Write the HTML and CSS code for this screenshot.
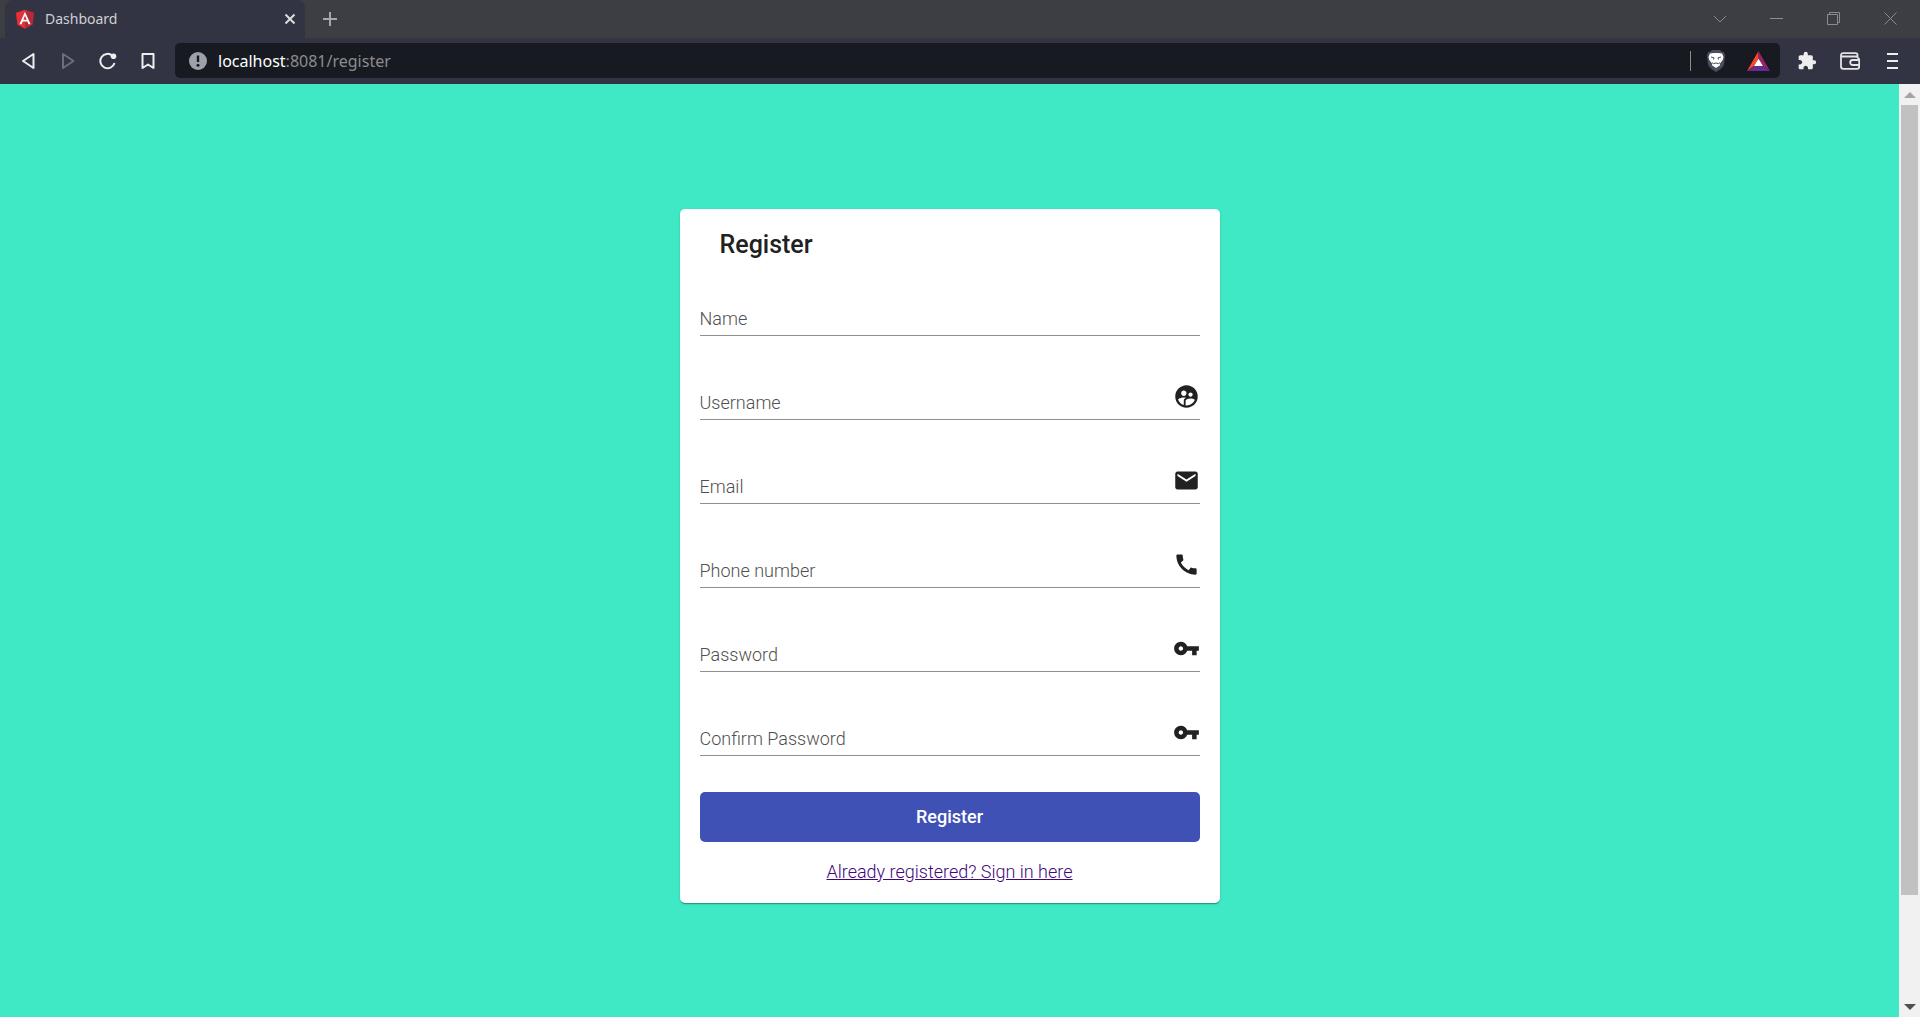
FILE: index.html
```html
<!DOCTYPE html>
<html lang="en">
<head>
<meta charset="utf-8">
<title>Dashboard</title>
<link rel="stylesheet" href="styles.css">
</head>
<body>
<header class="browser">
  <div class="tab-strip">
    <div class="tab">
      <svg class="favicon" viewBox="0 0 250 250"><path fill="#dd0031" d="M125 8 13 48l17 147 95 53 95-53 17-147z"/><path fill="#b52a35" d="M125 8v240l95-53 17-147z"/><path fill="#e23237" d="M125 8 13 48l17 147 95 53z"/><path fill="#fff" d="M125 35 55 192h27l14-35h58l14 35h27zm21 99h-42l21-50z"/></svg>
      <span class="tab-title">Dashboard</span>
      <button class="tab-close" aria-label="Close tab"><svg width="12" height="12" viewBox="0 0 12 12"><path d="M1.500 1.500l9 9m0-9l-9 9" stroke="#dcdde0" stroke-width="2"/></svg></button>
    </div>
    <button class="new-tab" aria-label="New tab"><svg width="16" height="16" viewBox="0 0 16 16"><path d="M8 1v14M1 8h14" stroke="#a8a8ac" stroke-width="2"/></svg></button>
    <div class="window-controls">
      <button aria-label="Search tabs"><svg width="14" height="8" viewBox="0 0 14 8"><path d="M1 1l6 6 6-6"/></svg></button>
      <button aria-label="Minimize"><svg width="13" height="13" viewBox="0 0 13 13"><path d="M0 6.500h13"/></svg></button>
      <button aria-label="Restore"><svg width="13" height="13" viewBox="0 0 13 13"><path d="M.5 2.500h10v10H.5zM2.500 2.500v-2h10v10h-2"/></svg></button>
      <button aria-label="Close"><svg width="13" height="13" viewBox="0 0 13 13"><path d="M.5.5l12 12m0-12l-12 12"/></svg></button>
    </div>
  </div>
  <div class="toolbar">
    <button class="nav" aria-label="Back"><svg width="18" height="18" viewBox="0 0 18 18"><path d="M14.500 2v14L4 9z"/></svg></button>
    <button class="nav disabled" aria-label="Forward"><svg width="18" height="18" viewBox="0 0 18 18"><path d="M4 2v14l10.500-7z"/></svg></button>
    <button class="nav" aria-label="Reload"><svg width="20" height="18" viewBox="0 0 20 18"><path d="M14.500 3.800A7.200 7.200 0 1 0 16.500 11"/><circle cx="15.500" cy="4.200" r="2.800" fill="#eeeeef" stroke="none"/></svg></button>
    <button class="nav" aria-label="Bookmark"><svg width="18" height="18" viewBox="0 0 18 18"><path d="M3.500 2h11v14L9 12.500 3.500 16z"/></svg></button>
    <div class="address">
      <svg class="info" viewBox="0 0 18 18"><circle cx="9" cy="9" r="9" fill="#9fa1aa"/><path d="M9 3.500v6.500" stroke="#181a21" stroke-width="2.400"/><circle cx="9" cy="13.200" r="1.500" fill="#181a21"/></svg>
      <div class="url"><span class="host">localhost</span>:8081/register</div>
      <span class="divider"></span>
      <button class="badge-button" aria-label="Shields"><svg width="20" height="22" viewBox="0 0 20 22"><path d="M4 2 6 0h8l2 2h2l1 4-1 8c-1 4-5 6-8 8-3-2-7-4-8-8L1 6l1-4z" fill="#4a4d5c"/><path fill="#fff" d="M4 3.500 7.500 3h5l3.500.5L17.500 7l-.8 3-2.700 3.500v1.700L10 18l-4-2.800v-1.700L3.300 10 2.500 7z"/><path d="M5 7l3 .8-.5 1.700M15 7l-3 .8.5 1.700M6 12.700l1.500 1L10 13l2.500.7 1.500-1" stroke="#4a4d5c" stroke-width="1" fill="none"/></svg></button>
      <button class="badge-button" aria-label="Rewards"><svg width="23" height="20" viewBox="0 0 23 20"><path fill="#ff4724" d="M11.500 0 0 20l7-5 4.500-8z"/><path fill="#9e1f63" d="M11.500 0 23 20l-7-5-4.500-8z"/><path fill="#662d91" d="M0 20h23l-7-5H7z"/><path fill="#fff" d="M11.500 7.500 16 15H7z"/></svg></button>
    </div>
    <div class="extensions">
      <button aria-label="Extensions"><svg width="20" height="20" viewBox="0 0 24 24"><path fill="#eeeeef" d="M20.500 11H19V7c0-1.100-.9-2-2-2h-4V3.500a2.500 2.500 0 0 0-5 0V5H4c-1.100 0-1.990.9-1.990 2v3.800H3.500c1.490 0 2.700 1.210 2.700 2.700s-1.210 2.700-2.700 2.700H2V20c0 1.100.9 2 2 2h3.800v-1.500c0-1.490 1.210-2.700 2.700-2.700s2.700 1.210 2.700 2.700V22H17c1.100 0 2-.9 2-2v-4h1.500a2.500 2.500 0 0 0 0-5z"/></svg></button>
      <button aria-label="Wallet"><svg width="20" height="18" viewBox="0 0 20 18" fill="none" stroke="#e4e4e6" stroke-width="1.800"><path d="M17.500 6V4.500H3A2 2 0 0 1 1 3.200C1 1.800 2 1.200 3 1.200h12.500c1 0 2 .8 2 1.800v1.500M1 3v11.500c0 1.400 1 2.300 2.300 2.300H17c1.400 0 2.200-.8 2.200-2V8c0-1.200-.7-2-1.700-2.200M19 8h-6.300a2.500 2.500 0 0 0 0 5H19"/></svg></button>
      <button aria-label="Menu"><svg width="11" height="16" viewBox="0 0 11 16"><path d="M0 1h11M0 8h11M0 15h11" stroke="#eeeeef" stroke-width="2"/></svg></button>
    </div>
  </div>
</header>
<div class="viewport">
  <main class="page">
    <section class="card">
      <h1>Register</h1>
      <form>
        <div class="field"><input type="text" placeholder="Name" aria-label="Name"></div>
        <div class="field"><input type="text" placeholder="Username" aria-label="Username">
          <svg viewBox="0 0 24 24"><path d="M11.990 2C6.470 2 2 6.480 2 12s4.470 10 9.990 10S22 17.520 22 12 17.520 2 11.990 2zm3.610 6.340c1.070 0 1.930.86 1.930 1.930s-.86 1.930-1.930 1.930-1.930-.86-1.930-1.930c-.01-1.070.86-1.930 1.930-1.930zm-6-1.580c1.300 0 2.360 1.060 2.360 2.360s-1.060 2.360-2.360 2.360-2.360-1.060-2.360-2.360c0-1.310 1.050-2.360 2.360-2.360zm0 9.130v3.750c-2.400-.75-4.300-2.600-5.140-4.960 1.050-1.120 3.670-1.690 5.140-1.690.53 0 1.200.08 1.900.22-1.640.87-1.900 2.020-1.900 2.680zM11.990 20c-.27 0-.53-.01-.79-.04v-4.070c0-1.420 2.940-2.130 4.400-2.130 1.070 0 2.920.39 3.840 1.150C18.280 17.880 15.390 20 11.990 20z"/></svg></div>
        <div class="field"><input type="email" placeholder="Email" aria-label="Email">
          <svg viewBox="0 0 24 24"><path d="M20 4H4c-1.100 0-1.990.9-1.990 2L2 18c0 1.100.9 2 2 2h16c1.100 0 2-.9 2-2V6c0-1.100-.9-2-2-2zm0 4l-8 5-8-5V6l8 5 8-5v2z"/></svg></div>
        <div class="field"><input type="tel" placeholder="Phone number" aria-label="Phone number">
          <svg viewBox="0 0 24 24"><path d="M20.010 15.380c-1.230 0-2.420-.2-3.530-.56-.35-.12-.74-.03-1.010.24l-1.570 1.970c-2.830-1.350-5.480-3.900-6.890-6.830l1.950-1.660c.27-.28.35-.67.24-1.020-.37-1.110-.56-2.300-.56-3.530 0-.54-.45-.99-.99-.99H4.190C3.650 3 3 3.240 3 3.990 3 13.280 10.730 21 20.010 21c.71 0 .99-.63.99-1.180v-3.450c0-.54-.45-.99-.99-.99z"/></svg></div>
        <div class="field"><input type="password" placeholder="Password" aria-label="Password">
          <svg viewBox="0 0 24 24"><path d="M12.650 10C11.830 7.670 9.610 6 7 6c-3.310 0-6 2.690-6 6s2.690 6 6 6c2.610 0 4.830-1.670 5.650-4H17v4h4v-4h2v-4H12.650zM7 14c-1.100 0-2-.9-2-2s.9-2 2-2 2 .9 2 2-.9 2-2 2z"/></svg></div>
        <div class="field"><input type="password" placeholder="Confirm Password" aria-label="Confirm Password">
          <svg viewBox="0 0 24 24"><path d="M12.650 10C11.830 7.670 9.610 6 7 6c-3.310 0-6 2.690-6 6s2.690 6 6 6c2.610 0 4.830-1.670 5.650-4H17v4h4v-4h2v-4H12.650zM7 14c-1.100 0-2-.9-2-2s.9-2 2-2 2 .9 2 2-.9 2-2 2z"/></svg></div>
        <button class="submit" type="submit">Register</button>
      </form>
      <a class="sign-in" href="#login">Already registered? Sign in here</a>
    </section>
  </main>
  <div class="scrollbar">
    <span class="arrow"><svg width="12" height="6" viewBox="0 0 12 6"><path fill="#a3a3a3" d="M0 6h12L6 0z"/></svg></span>
    <span class="thumb"></span>
    <span class="track"></span>
    <span class="arrow"><svg width="12" height="6" viewBox="0 0 12 6"><path fill="#505050" d="M0 0h12L6 6z"/></svg></span>
  </div>
</div>
</body>
</html>
```
FILE: styles.css
```css
* { box-sizing: border-box; }

body {
  margin: 0;
  min-height: 100vh;
  display: flex;
  flex-direction: column;
  font-family: Roboto, sans-serif;
  font-size: 18px;
}

button {
  border: 0;
  padding: 0;
  background: none;
  display: flex;
  align-items: center;
  justify-content: center;
}

.browser { font-family: "Noto Sans", sans-serif; }

.tab-strip {
  display: flex;
  height: 38px;
  padding: 0 1px 0 5px;
  background: #3d3d44;
}

.tab {
  display: flex;
  align-items: center;
  width: 300px;
  padding: 0 9px 0 10px;
  border-radius: 8px 8px 0 0;
  background: #323443;
}

.favicon { width: 20px; height: 20px; }

.tab-title {
  flex: 1;
  margin-left: 10px;
  font-size: 14px;
  line-height: 20px;
  color: #cfd0d4;
}

.tab-close { width: 12px; height: 38px; }

.new-tab { width: 50px; }

.window-controls { display: flex; margin-left: auto; }
.window-controls button { width: 57px; padding-bottom: 1px; }
.window-controls svg { fill: none; stroke: #8c8b90; stroke-width: 1; }

.toolbar {
  display: flex;
  align-items: center;
  height: 46px;
  padding: 0 6px 1px 8px;
  background: #323443;
}

.nav { width: 40px; height: 35px; }
.nav svg { fill: none; stroke: #eeeeef; stroke-width: 2; stroke-linejoin: round; }
.nav.disabled svg { stroke: #6c6e7a; }

.address {
  flex: 1;
  display: flex;
  align-items: center;
  height: 35px;
  margin: 0 5px 0 7px;
  border-radius: 5px;
  background: #181a21;
}

.info { width: 18px; height: 18px; margin-left: 14px; }

.url {
  flex: 1;
  margin-left: 11px;
  font-size: 16px;
  line-height: 24px;
  color: #8b8c90;
}

.host { color: #fff; }

.divider { width: 1px; height: 20px; margin-right: 3px; background: #8b8c90; }

.badge-button { width: 43px; }

.extensions { display: flex; }
.extensions button { width: 43px; height: 35px; }

.viewport { flex: 1; display: flex; }

.page {
  flex: 1;
  display: flex;
  justify-content: center;
  align-items: flex-start;
  padding: 125px 20px 20px;
  background: #3fe9c5;
}

.card {
  width: 100%;
  max-width: 540px;
  padding: 20px;
  border-radius: 5px;
  background: #fff;
  box-shadow: 0 2px 1px -1px rgba(0, 0, 0, .2), 0 1px 1px rgba(0, 0, 0, .14), 0 1px 3px rgba(0, 0, 0, .12);
}

h1 {
  margin: 0 20px 27px;
  font-size: 25px;
  font-weight: 500;
  line-height: 32px;
  color: #212121;
}

form { display: flex; flex-direction: column; gap: 36px; }

.field {
  display: flex;
  align-items: flex-end;
  height: 48px;
  border-bottom: 1px solid #8f8f8f;
}

.field input {
  flex: 1;
  padding: 0 0 5px;
  border: 0;
  outline: 0;
  font: 300 18px/22px Roboto, sans-serif;
}

.field input::placeholder { color: #505050; opacity: 1; }

.field svg { width: 27px; height: 27px; margin-bottom: 9px; fill: #212121; }

.submit {
  height: 50px;
  border-radius: 5px;
  background: #3f51b5;
  color: #fff;
  font: 500 18px/24px Roboto, sans-serif;
}

.sign-in {
  display: block;
  margin-top: 19px;
  text-align: center;
  line-height: 22px;
  font-weight: 300;
  color: #40087a;
}

.scrollbar {
  display: flex;
  flex-direction: column;
  width: 21px;
  padding: 0 2px;
  background: #f1f1f1;
}

.arrow { display: flex; align-items: center; justify-content: center; height: 21px; }
.thumb { flex: 39; background: #c1c1c1; }
.track { flex: 5; }
```
